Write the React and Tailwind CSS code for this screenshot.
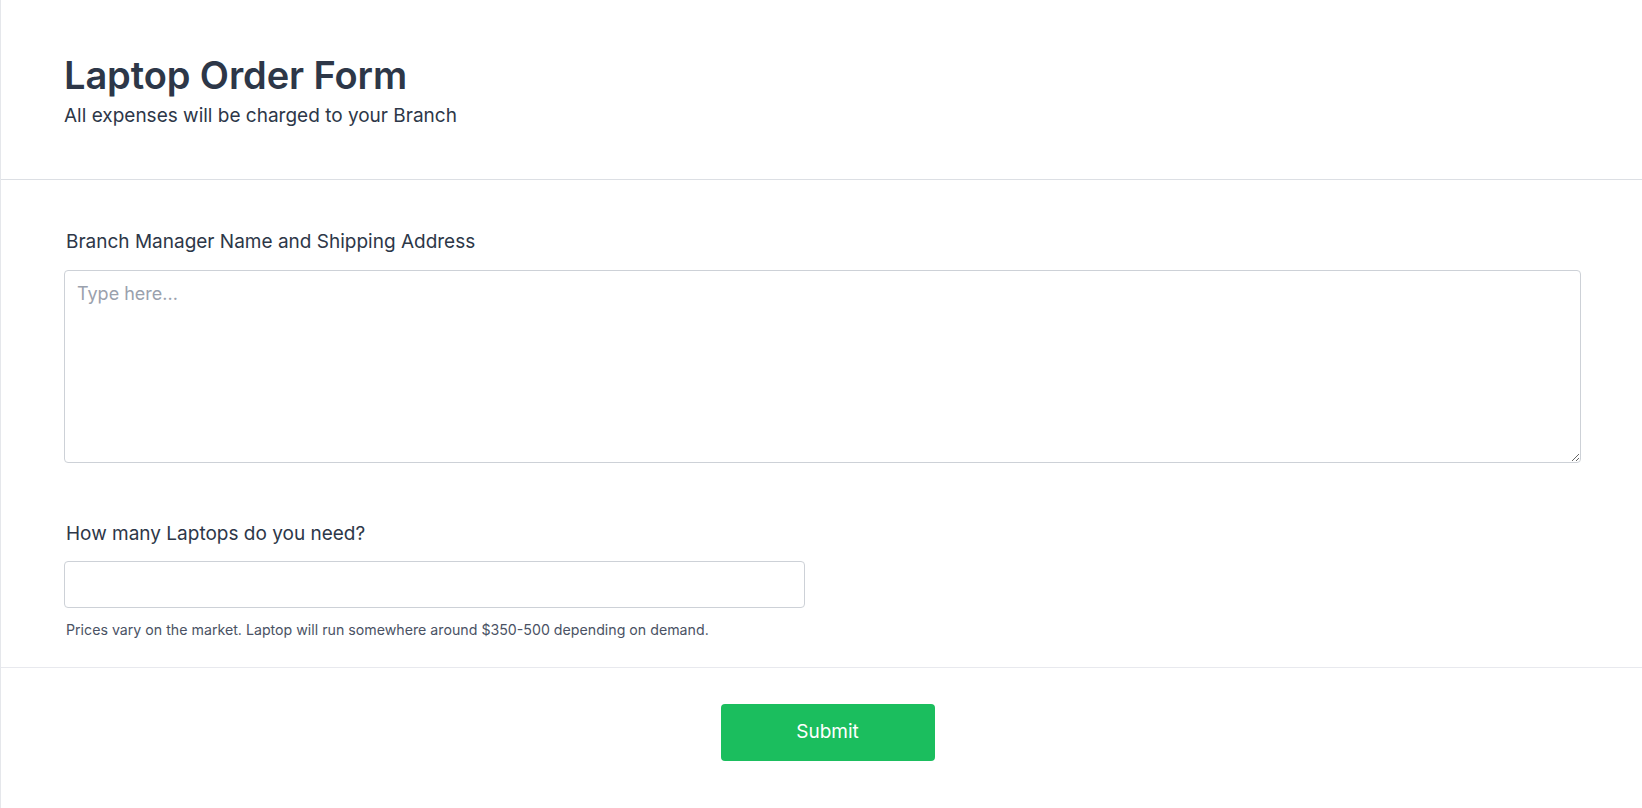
import React, { useState } from "react";

export default function App() {
	const [address, setAddress] = useState("");
	const [count, setCount] = useState("");

	return (
		<div
			className="min-h-screen bg-white text-[#2d3748]"
			style={{ fontFamily: "Inter, 'Noto Sans', sans-serif" }}>
			<form
				className="w-full border-l border-b border-[#e5e7eb]"
				onSubmit={(e) => e.preventDefault()}>
				<header className="h-[180px] border-b border-[#dcdfe4] px-[63px] pt-[52px]">
					<h1 className="text-[38px] leading-[46px] font-semibold tracking-[-0.1px]">
						Laptop Order Form
					</h1>
					<p className="mt-[5px] text-[19px] leading-[26px]">
						All expenses will be charged to your Branch
					</p>
				</header>

				<section className="border-b border-[#e8e9ee] px-[63px] pt-[49px] pb-[27px]">
					<label className="block pl-[2px] text-[19px] leading-[26px]">
						Branch Manager Name and Shipping Address
					</label>
					<textarea
						value={address}
						onChange={(e) => setAddress(e.target.value)}
						placeholder="Type here..."
						className="mt-[15px] block h-[193px] w-[1517px] rounded-[4px] border border-[#cdd1d7] px-[12px] py-[11px] text-[18px] leading-[24px] outline-none placeholder:text-[#9aa1ad]"
					/>

					<label className="mt-[58px] block pl-[2px] text-[19px] leading-[26px]">
						How many Laptops do you need?
					</label>
					<input
						type="text"
						value={count}
						onChange={(e) => setCount(e.target.value)}
						className="mt-[14px] block h-[47px] w-[741px] rounded-[4px] border border-[#cdd1d7] px-[12px] text-[18px] outline-none"
					/>
					<p className="mt-[12px] pl-[2px] text-[14.2px] leading-[20px] text-[#4a5264]">
						Prices vary on the market. Laptop will run somewhere around
						$350-500 depending on demand.
					</p>
				</section>

				<footer className="flex h-[140px] justify-center pt-[36px]">
					<button
						type="submit"
						className="ml-[12px] h-[57px] w-[214px] rounded-[4px] bg-[#1bbe5e] text-[19px] text-white">
						Submit
					</button>
				</footer>
			</form>
		</div>
	);
}
